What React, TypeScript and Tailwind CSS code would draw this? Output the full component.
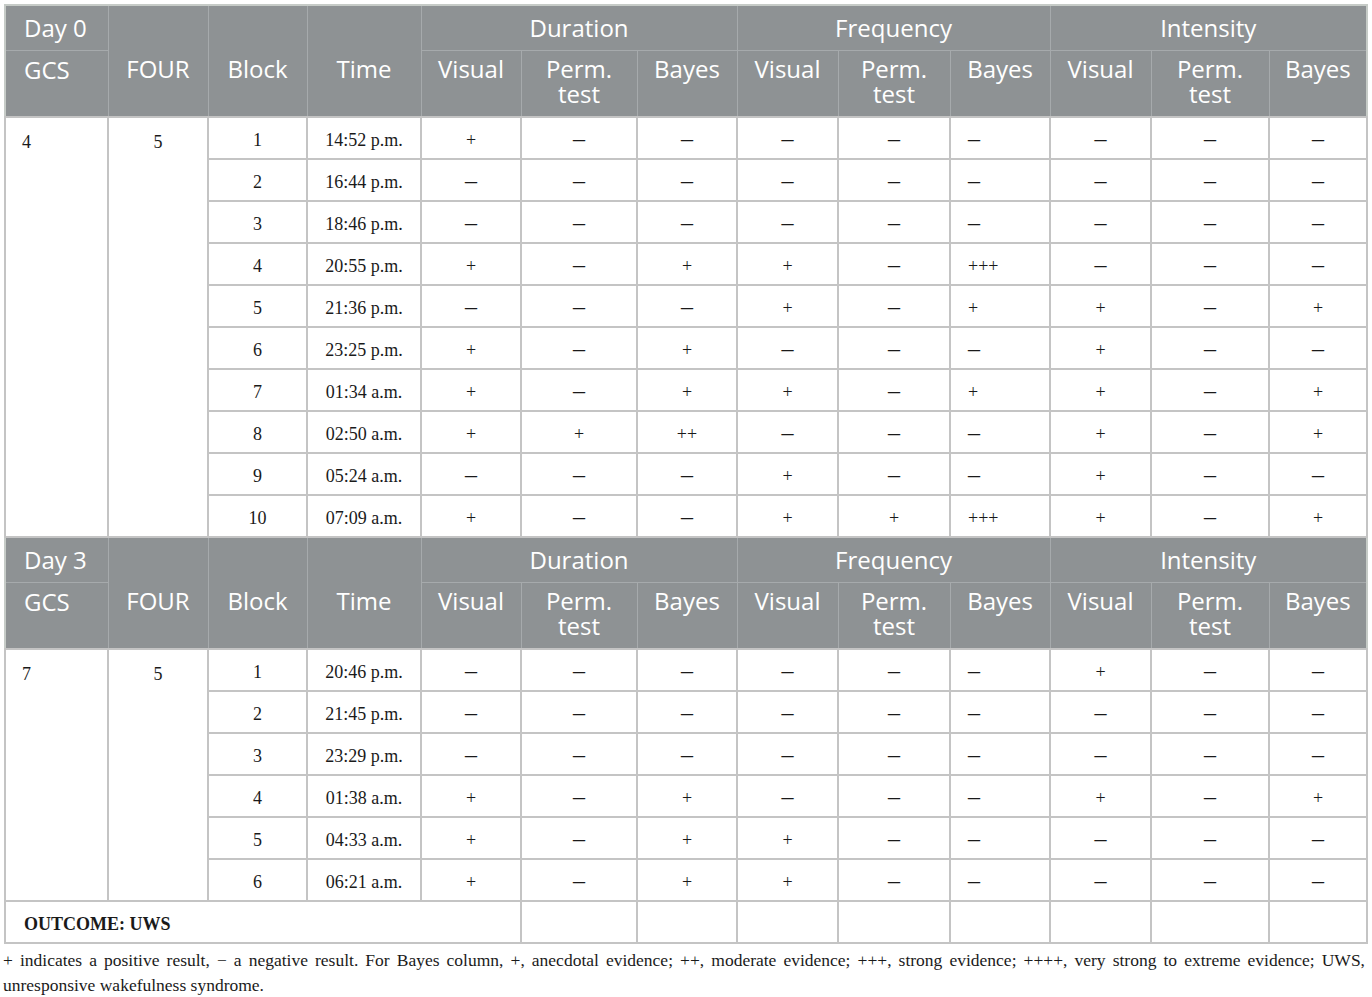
import React from 'react';

type Row = { block: string; time: string; vals: string[] };

const M = '–';

const day0: Row[] = [
  { block: '1', time: '14:52 p.m.', vals: ['+', M, M, M, M, M, M, M, M] },
  { block: '2', time: '16:44 p.m.', vals: [M, M, M, M, M, M, M, M, M] },
  { block: '3', time: '18:46 p.m.', vals: [M, M, M, M, M, M, M, M, M] },
  { block: '4', time: '20:55 p.m.', vals: ['+', M, '+', '+', M, '+++', M, M, M] },
  { block: '5', time: '21:36 p.m.', vals: [M, M, M, '+', M, '+', '+', M, '+'] },
  { block: '6', time: '23:25 p.m.', vals: ['+', M, '+', M, M, M, '+', M, M] },
  { block: '7', time: '01:34 a.m.', vals: ['+', M, '+', '+', M, '+', '+', M, '+'] },
  { block: '8', time: '02:50 a.m.', vals: ['+', '+', '++', M, M, M, '+', M, '+'] },
  { block: '9', time: '05:24 a.m.', vals: [M, M, M, '+', M, M, '+', M, M] },
  { block: '10', time: '07:09 a.m.', vals: ['+', M, M, '+', '+', '+++', '+', M, '+'] },
];

const day3: Row[] = [
  { block: '1', time: '20:46 p.m.', vals: [M, M, M, M, M, M, '+', M, M] },
  { block: '2', time: '21:45 p.m.', vals: [M, M, M, M, M, M, M, M, M] },
  { block: '3', time: '23:29 p.m.', vals: [M, M, M, M, M, M, M, M, M] },
  { block: '4', time: '01:38 a.m.', vals: ['+', M, '+', M, M, M, '+', M, '+'] },
  { block: '5', time: '04:33 a.m.', vals: ['+', M, '+', '+', M, M, M, M, M] },
  { block: '6', time: '06:21 a.m.', vals: ['+', M, '+', '+', M, M, M, M, M] },
];

const th = 'border border-[#a6aaac] bg-[#8e9294] font-normal text-white align-top leading-[25px]';
const td = 'border-2 border-[#c4c4c4] h-[42px] text-center align-middle pt-[4px]';

function Header({ day }: { day: string }) {
  const sub = ['Visual', 'Perm.|test', 'Bayes'];
  return (
    <>
      <tr className="h-[45px]">
        <th className={`${th} text-left pl-[18px] pt-[9px]`}>{day}</th>
        <th className={`${th} border-b-0`}></th>
        <th className={`${th} border-b-0`}></th>
        <th className={`${th} border-b-0`}></th>
        <th colSpan={3} className={`${th} pt-[9px]`}>Duration</th>
        <th colSpan={3} className={`${th} pt-[9px]`}>Frequency</th>
        <th colSpan={3} className={`${th} pt-[9px]`}>Intensity</th>
      </tr>
      <tr className="h-[67px]">
        <th className={`${th} text-left pl-[18px] pt-[6px]`}>GCS</th>
        <th className={`${th} border-t-0 pt-[6px]`}>FOUR</th>
        <th className={`${th} border-t-0 pt-[6px]`}>Block</th>
        <th className={`${th} border-t-0 pt-[6px]`}>Time</th>
        {[0, 1, 2].flatMap((g) =>
          sub.map((s, i) => {
            const parts = s.split('|');
            return (
              <th key={`${g}-${i}`} className={`${th} pt-[5px]`}>
                {parts[0]}
                {parts[1] && (
                  <>
                    <br />
                    {parts[1]}
                  </>
                )}
              </th>
            );
          })
        )}
      </tr>
    </>
  );
}

function Mark({ v }: { v: string }) {
  if (v === M) return <span className="text-[24px] leading-none">{M}</span>;
  return <>{v}</>;
}

function Body({ gcs, four, rows }: { gcs: string; four: string; rows: Row[] }) {
  return (
    <>
      {rows.map((r, idx) => (
        <tr key={r.block}>
          {idx === 0 && (
            <>
              <td rowSpan={rows.length} className={`${td} text-left align-top pl-[16px] pt-[11px]`}>{gcs}</td>
              <td rowSpan={rows.length} className={`${td} align-top pt-[11px]`}>{four}</td>
            </>
          )}
          <td className={td}>{r.block}</td>
          <td className={td}>{r.time}</td>
          {r.vals.map((v, i) => (
            <td key={i} className={i === 5 ? `${td} text-left pl-[17px]` : td}>
              <Mark v={v} />
            </td>
          ))}
        </tr>
      ))}
    </>
  );
}

export default function App() {
  const widths = ['w-[103px]', 'w-[100px]', 'w-[99px]', 'w-[114px]', 'w-[100px]', 'w-[116px]', 'w-[100px]', 'w-[101px]', 'w-[112px]', 'w-[100px]', 'w-[101px]', 'w-[118px]', 'w-[98px]'];
  return (
    <div className="w-[1372px] min-h-[997px] bg-white pt-[4px] pl-[4px] text-[#1a1a1a]">
      <table className="table-fixed border-collapse w-[1362px] border-2 border-[#c6cbc7] font-['Liberation_Serif',serif] text-[18px]">
        <colgroup>
          {widths.map((w, i) => (
            <col key={i} className={w} />
          ))}
        </colgroup>
        <thead className="font-['Open_Sans',sans-serif] text-[24px]">
          <Header day="Day 0" />
        </thead>
        <tbody>
          <Body gcs="4" four="5" rows={day0} />
        </tbody>
        <tbody className="font-['Open_Sans',sans-serif] text-[24px]">
          <Header day="Day 3" />
        </tbody>
        <tbody>
          <Body gcs="7" four="5" rows={day3} />
          <tr>
            <td colSpan={5} className={`${td} text-left pl-[18px] font-bold`}>OUTCOME: UWS</td>
            {Array.from({ length: 8 }).map((_, i) => (
              <td key={i} className={td}></td>
            ))}
          </tr>
        </tbody>
      </table>
      <p className="-ml-[1px] mt-[4px] w-[1362px] text-justify font-['Liberation_Serif',serif] text-[17.5px] leading-[25px] text-[#1a1a1a]">
        + indicates a positive result, − a negative result. For Bayes column, +, anecdotal evidence; ++, moderate evidence; +++, strong evidence; ++++, very strong to extreme evidence; UWS, unresponsive wakefulness syndrome.
      </p>
    </div>
  );
}
